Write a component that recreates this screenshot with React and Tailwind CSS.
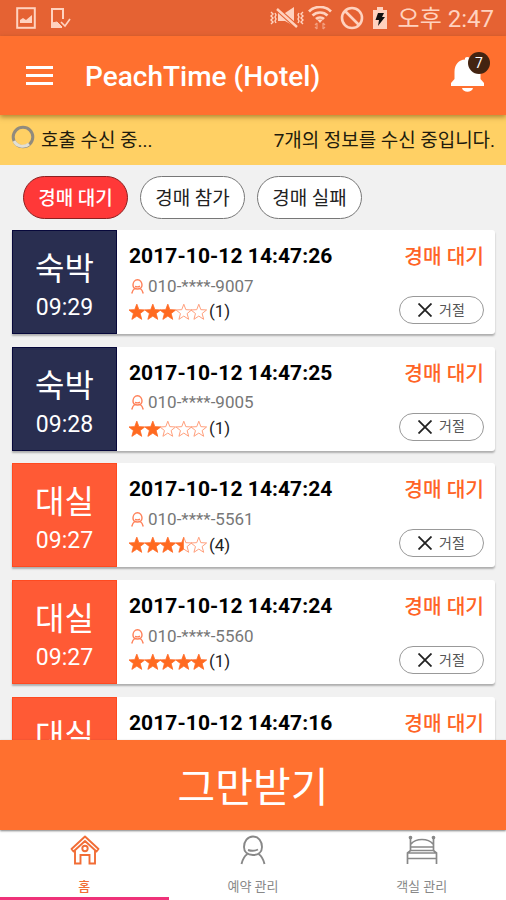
const FONT = "font-[Roboto,'Noto_Sans_CJK_KR',sans-serif]";

const tabs = ['경매 대기', '경매 참가', '경매 실패'];

const requests = [
  { id: 1, type: '숙박', timer: '09:29', date: '2017-10-12 14:47:26', phone: '010-****-9007', rating: 3, count: 1 },
  { id: 2, type: '숙박', timer: '09:28', date: '2017-10-12 14:47:25', phone: '010-****-9005', rating: 2, count: 1 },
  { id: 3, type: '대실', timer: '09:27', date: '2017-10-12 14:47:24', phone: '010-****-5561', rating: 3.5, count: 4 },
  { id: 4, type: '대실', timer: '09:27', date: '2017-10-12 14:47:24', phone: '010-****-5560', rating: 5, count: 1 },
  { id: 5, type: '대실', timer: '09:27', date: '2017-10-12 14:47:16' },
];

const STAR = 'M8 0l2.1 5.6 5.9.3-4.6 3.7 1.6 5.9L8 12.2l-5 3.3 1.6-5.9L0 5.9l5.9-.3z';

function Star({ fill }) {
  return (
    <svg viewBox="0 0 16 16" className="h-4 w-[15.6px] overflow-visible">
      <path d={STAR} fill="none" stroke="#ff9c78" strokeWidth="1" />
      {fill > 0 && (
        <path
          d={STAR}
          fill="#ff6a20"
          stroke="#ff6a20"
          strokeWidth="0.5"
          style={{ clipPath: fill < 1 ? `inset(0 ${(1 - fill) * 100}% 0 0)` : undefined }}
        />
      )}
    </svg>
  );
}

function PersonIcon({ className, strokeWidth = 2 }) {
  return (
    <svg viewBox="0 0 26 30" className={className} fill="none" stroke="currentColor" strokeWidth={strokeWidth}>
      <path d="M13 1.5C7.5 1.5 4 6.5 4 12c0 5 3.5 8 9 8s9-3 9-8c0-5.500-3.500-10.500-9-10.500z" />
      <path d="M8 15c3 1 7 1 10-.5" />
      <path d="M7.500 19C4.500 21 2.500 24.500 1.500 29M18.500 19c3 2 5 5.500 6 10" />
    </svg>
  );
}

function HomeIcon() {
  return (
    <svg viewBox="0 0 30 30" className="ml-px h-[30px] w-[30px]" fill="none" stroke="currentColor" strokeWidth="1.9">
      <path d="M15 1.500L1.500 14l2 2.500L15 6l11.500 10.500 2-2.500z" strokeLinejoin="round" />
      <path d="M5 15.500v13h5.500V20h9v8.500H25v-13" />
      <circle cx="15" cy="13.500" r="2.700" />
    </svg>
  );
}

function BedIcon() {
  return (
    <svg viewBox="0 0 32 30" className="ml-px h-[30px] w-8" fill="none" stroke="currentColor" strokeWidth="1.7">
      <path d="M4.500 4v12M27.500 4v12M5 9C10 3 22 3 27 9M4.500 12h23" />
      <path d="M1.500 29V18l3-2.500h23l3 2.500v11M1.500 18h29M1.500 23.500h29" />
      <circle cx="4.500" cy="2.500" r="1" fill="currentColor" />
      <circle cx="27.500" cy="2.500" r="1" fill="currentColor" />
    </svg>
  );
}

function StatusBar() {
  return (
    <div className="flex h-9 items-center bg-[#e56233] pr-3 pl-4 text-[#ffd2bf]">
      {/* Notifications */}
      <svg viewBox="0 0 20 22" className="h-[22px] w-5">
        <rect x="1.2" y="1.2" width="17.6" height="19.6" fill="none" stroke="currentColor" strokeWidth="2" />
        <path d="M4 16v-3l3-2 3 2 6-5v8z" fill="currentColor" />
      </svg>
      <svg viewBox="0 0 21 22" className="ml-3.5 h-[22px] w-[21px]" fill="none" stroke="currentColor" strokeWidth="2">
        <path d="M13 12V2H2v18h10" />
        <path d="M2 16l5-1 5 5H2z" fill="currentColor" strokeWidth="1" />
        <path d="M11 15l4 4 5-7" strokeWidth="1.7" />
      </svg>

      {/* System icons */}
      <svg viewBox="0 0 34 22" className="ml-auto h-[22px] w-[34px]" fill="none" stroke="currentColor" strokeWidth="1.4">
        <path d="M1 5l2 2-2 2 2 2-2 2 2 2-2 2M5 6l1 2-1 2 1 2-1 2 1 2M33 5l-2 2 2 2-2 2 2 2-2 2 2 2M29 6l-1 2 1 2-1 2 1 2-1 2" />
        <path d="M8 6h7l9-6v19l-9-5H8z" fill="currentColor" stroke="none" />
        <path d="M7 2l20 18" stroke="#e56233" strokeWidth="4.5" />
        <path d="M7 2l20 18" strokeWidth="2.4" />
      </svg>
      <svg viewBox="0 0 24 24" className="ml-1 h-6 w-6" fill="none" stroke="currentColor" strokeWidth="2.7">
        <path d="M1 5.500C7-.5 17-.5 23 5.500M4.500 9.500c4-4 11-4 15 0M8 13c2-2 6-2 8 0" />
        <path d="M12 17l-3-3.500h6z" fill="currentColor" stroke="none" />
        <path d="M9 23v-6M7 19l2-2M7 21l2 2M15 23v-6M17 19l-2-2M17 21l-2 2" strokeWidth="1.2" opacity=".55" />
      </svg>
      <svg viewBox="0 0 24 24" className="ml-2 h-6 w-6" fill="none" stroke="currentColor" strokeWidth="2.6">
        <circle cx="12" cy="12" r="10" />
        <path d="M5 5l14 14" />
      </svg>
      <svg viewBox="0 0 16 22" className="ml-2 h-[22px] w-4">
        <path d="M1 3h4V0h6v3h4v19H1z" fill="currentColor" />
        <path d="M6 6h6l-2 4h3l-7 9 1-6H3.500z" fill="#111" />
      </svg>
      <span className="ml-2.5 pt-px text-[24px] leading-9 whitespace-nowrap">오후 2:47</span>
    </div>
  );
}

function Header() {
  return (
    <header className="relative z-10 flex h-[79px] shrink-0 items-center bg-[#ff702f] pl-[26px] text-white shadow-[0_2px_5px_rgba(90,60,0,0.5)]">
      <div className="flex w-[27px] flex-col gap-[5px]">
        <span className="h-[3px] bg-current" />
        <span className="h-[3px] bg-current" />
        <span className="h-[3px] bg-current" />
      </div>
      <h1 className="ml-8 pt-0.5 text-[28px] font-medium">PeachTime (Hotel)</h1>
      <div className="relative mr-4 mb-[7px] ml-auto h-10 w-10">
        <svg viewBox="0 0 40 40" className="h-10 w-10" fill="currentColor">
          <path d="M1 34v-3l3.500-4V20C4.500 12 9 8 15 7.500V6q2-2 5 0v1.500C26 9 30.500 13 30.500 20v7l3.500 4v3z" />
          <path d="M12 36h11c-1 5-10 5-11 0z" />
        </svg>
        <span className="absolute top-0 right-0 flex h-[22px] w-[22px] items-center justify-center rounded-full bg-[#432411] pt-px text-[14px]">7</span>
      </div>
    </header>
  );
}

function RequestCard({ item }) {
  return (
    <article className="flex h-[104px] shrink-0 rounded-r-[3px] bg-white shadow-[0_2px_2px_rgba(0,0,0,0.28)]">
      <div
        className={`flex w-[105px] flex-col items-center border text-white ${
          item.type === '숙박' ? 'border-[#07083b] bg-[#292e50]' : 'border-[#ff4a20] bg-[#ff5a35]'
        }`}
      >
        <span className="mt-4 text-[32px] leading-[44px]">{item.type}</span>
        <span className="text-[23px] leading-[34px]">{item.timer}</span>
      </div>
      <div className="flex flex-1 justify-between pr-[11px] pl-3">
        <div className="flex flex-col">
          <span className="mt-3 text-[21px] leading-7 font-bold tracking-[0.06px] text-black">{item.date}</span>
          {item.phone && (
            <>
              <div className="mt-0.5 flex h-[29px] items-center text-[17px] text-[#777]">
                <PersonIcon className="mr-1 mb-px ml-0.5 h-[15px] w-[13px] text-[#ff8058]" strokeWidth={2.8} />
                {item.phone}
              </div>
              <div className="-mt-px flex h-6 items-center text-[17px] text-[#222]">
                {[0, 1, 2, 3, 4].map((i) => (
                  <Star key={i} fill={Math.max(0, Math.min(1, item.rating - i))} />
                ))}
                <span className="ml-0.5">({item.count})</span>
              </div>
            </>
          )}
        </div>
        <div className="flex flex-col items-end">
          <span className="mt-[13px] text-[20.3px] leading-7 font-medium text-[#ff6426]">경매 대기</span>
          {item.phone && (
            <button className="mt-[25px] flex h-7 w-[85px] items-center justify-center gap-[7px] rounded-full border border-[#999] text-[14px] whitespace-nowrap text-[#555]">
              <svg viewBox="0 0 14 14" className="h-3.5 w-3.5 shrink-0" stroke="#222" strokeWidth="1.8">
                <path d="M.5.5l13 13M13.5.5l-13 13" />
              </svg>
              거절
            </button>
          )}
        </div>
      </div>
    </article>
  );
}

export default function App() {
  return (
    <div className={`flex h-[900px] w-[506px] flex-col overflow-hidden bg-[#f1f1f1] ${FONT}`}>
      <StatusBar />
      <Header />

      {/* Receiving notice */}
      <div className="flex h-[50px] shrink-0 items-center bg-[#ffd064] px-[11px] text-[19px] tracking-[-0.05px] text-[#211b0d]">
        <svg viewBox="0 0 24 24" className="mr-1.5 mb-[7px] h-6 w-6" fill="none" strokeWidth="3">
          <circle cx="12" cy="12" r="9.800" stroke="#918b7d" />
          <path d="M3 16a9.800 9.800 0 0 0 15 3" stroke="#e1dfd4" />
        </svg>
        <span className="pt-0.5">호출 수신 중...</span>
        <span className="ml-auto pt-0.5">7개의 정보를 수신 중입니다.</span>
      </div>

      {/* Filter tabs */}
      <div className="flex h-[65px] shrink-0 gap-3 pt-[11px] pl-[23px]">
        {tabs.map((tab, i) => (
          <button
            key={tab}
            className={`h-[43px] w-[105px] rounded-full border pt-[3px] text-[19px] ${
              i === 0 ? 'border-[#8c2020] bg-[#ff3838] font-medium text-white' : 'border-[#777] bg-white text-[#222]'
            }`}
          >
            {tab}
          </button>
        ))}
      </div>

      {/* Request list */}
      <main className="flex min-h-0 flex-1 flex-col gap-[12.7px] overflow-hidden pr-[11px] pl-3">
        {requests.map((item) => (
          <RequestCard key={item.id} item={item} />
        ))}
      </main>

      <button className="relative h-[90px] shrink-0 bg-[#ff702f] pt-[7px] text-[41px] text-white shadow-[0_1px_2px_rgba(0,0,0,0.5)]">
        그만받기
      </button>

      {/* Bottom navigation */}
      <nav className="grid h-[70px] shrink-0 grid-cols-3 bg-white text-[13px] text-[#888]">
        <div className="flex flex-col items-center border-b-[3px] border-[#ef3279] pt-[5px] text-[#f16d36]">
          <HomeIcon />
          <span className="mt-3 leading-5 font-medium">홈</span>
        </div>
        <div className="flex flex-col items-center pt-[5px]">
          <PersonIcon className="h-[30px] w-[26px]" strokeWidth={1.9} />
          <span className="mt-3 leading-5">예약 관리</span>
        </div>
        <div className="flex flex-col items-center pt-[5px]">
          <BedIcon />
          <span className="mt-3 leading-5">객실 관리</span>
        </div>
      </nav>
    </div>
  );
}
